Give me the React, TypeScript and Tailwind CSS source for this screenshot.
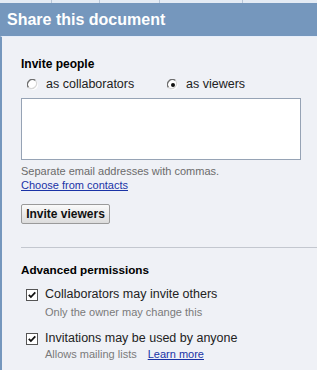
import React from "react";

function Radio({ checked }: { checked?: boolean }) {
  return (
    <svg width="12" height="12" viewBox="0 0 12 12" className="shrink-0">
      <circle cx="6" cy="6" r="5" fill="#ffffff" />
      <path d="M1.5 8.5 A5 5 0 0 1 8.5 1.5" stroke="#6e6e6e" strokeWidth="1.3" fill="none" />
      <path d="M8.5 1.5 A5 5 0 0 1 1.5 8.5" stroke="#d8d8d8" strokeWidth="1.2" fill="none" />
      {checked && <circle cx="6" cy="6" r="2" fill="#111" />}
    </svg>
  );
}

function Check() {
  return (
    <svg width="12" height="12" viewBox="0 0 12 12" className="shrink-0">
      <rect x="0.5" y="0.5" width="11" height="11" fill="#ffffff" stroke="#555" />
      <path d="M2.8 5.8 L4.9 8 L9.3 3.4" stroke="#111" strokeWidth="1.8" fill="none" />
    </svg>
  );
}

export default function App() {
  return (
    <div
      className="w-[317px] h-[370px] overflow-hidden bg-[#eff1f6] flex flex-col"
      style={{ fontFamily: '"Liberation Sans", Arial, sans-serif' }}
    >
      <div className="h-[3px] bg-[#e4ebf4] flex shrink-0">
        <div className="w-[52px] border-r border-[#b8c6d8]" />
        <div className="w-[48px] border-r border-[#b8c6d8]" />
        <div className="w-[60px] border-r border-[#b8c6d8]" />
        <div className="w-[83px] border-r border-[#b8c6d8]" />
      </div>
      <div className="h-[33px] bg-[#7597bd] flex items-center pl-[7px] shrink-0">
        <span className="text-white font-bold text-[16px] leading-none">Share this document</span>
      </div>
      <div className="flex-1 border-l-2 border-[#7597bd] border-t border-t-[#e6eefa] pl-[19px] pt-[20px]">
        <div className="font-bold text-[12px] leading-[14px] text-black">Invite people</div>
        <div className="flex items-center mt-[6px] h-[15px] text-[12.5px] text-[#222]">
          <div className="flex items-center pl-[6px] w-[146px] gap-[7px]">
            <Radio />
            <span>as collaborators</span>
          </div>
          <div className="flex items-center gap-[7px]">
            <Radio checked />
            <span>as viewers</span>
          </div>
        </div>
        <div className="mt-[6px] w-[280px] h-[62px] bg-white border border-[#96a3b5]" />
        <div className="mt-[4px] text-[11px] leading-[14px] text-[#6b6b6b]">
          Separate email addresses with commas.
        </div>
        <div className="text-[11px] leading-[14px] text-[#1a33a6] underline">Choose from contacts</div>
        <button className="mt-[12px] h-[20px] w-[89px] justify-center border border-[#9a9a9a] rounded-[2px] bg-gradient-to-b from-[#fafafa] to-[#dcdcdc] text-[12px] font-bold text-[#111] leading-none flex items-center">
          Invite viewers
        </button>
        <div className="mt-[23px] h-px bg-[#c3c7cf]" />
        <div className="mt-[15px] font-bold text-[11.7px] leading-[14px] text-black">Advanced permissions</div>
        <div className="mt-[10px] pl-[5px] flex items-center gap-[7px] h-[15px] text-[12.5px] text-[#222]">
          <Check />
          <span>Collaborators may invite others</span>
        </div>
        <div className="pl-[24px] mt-[3px] text-[11px] leading-[14px] text-[#7a7a7a]">Only the owner may change this</div>
        <div className="mt-[12px] pl-[5px] flex items-center gap-[7px] h-[15px] text-[12.5px] text-[#222]">
          <Check />
          <span>Invitations may be used by anyone</span>
        </div>
        <div className="pl-[24px] mt-[1px] text-[11px] leading-[14px] text-[#7a7a7a] flex gap-[11px]">
          <span>Allows mailing lists</span>
          <span className="text-[#1a33a6] underline">Learn more</span>
        </div>
      </div>
    </div>
  );
}
